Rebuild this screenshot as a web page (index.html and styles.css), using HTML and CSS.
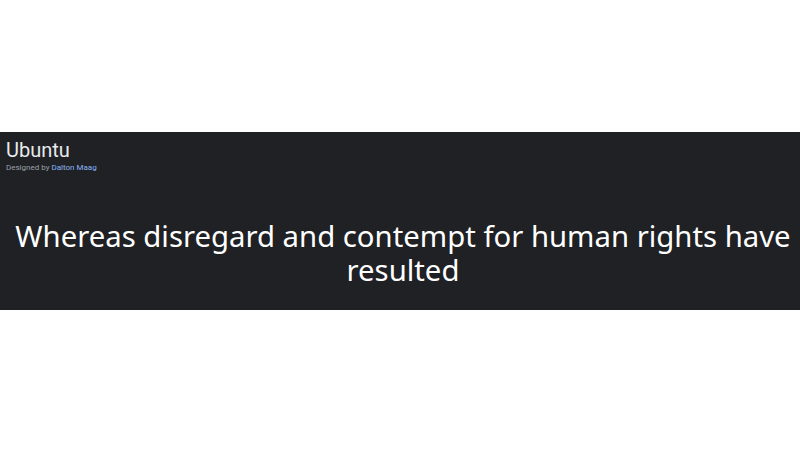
FILE: index.html
```html
<!DOCTYPE html>
<html>
<head>
<meta charset="utf-8">
<link rel="stylesheet" href="styles.css">
</head>
<body>
<div class="page">
  <section class="card">
    <header class="head">
      <div class="name">Ubuntu</div>
      <div class="designer">Designed by <span class="link">Dalton Maag</span></div>
    </header>
    <p class="sample">Whereas disregard and contempt for human rights have resulted</p>
  </section>
</div>
</body>
</html>
```
FILE: styles.css
```css
html, body {
  margin: 0;
  padding: 0;
  background: #ffffff;
}
.page {
  width: 800px;
  height: 450px;
  padding-top: 132px;
  box-sizing: border-box;
}
.card {
  background: #202124;
  height: 178px;
  box-sizing: border-box;
  padding: 7px 6px 0 6px;
  display: flex;
  flex-direction: column;
}
.head {
  font-family: "Roboto", "Liberation Sans", sans-serif;
}
.name {
  color: #e8eaed;
  font-size: 20px;
  line-height: 23px;
  font-weight: 400;
}
.designer {
  color: #9aa0a6;
  font-size: 8px;
  line-height: 12px;
}
.link {
  color: #8ab4f8;
}
.sample {
  margin: 45px 0 0 0;
  padding-left: 6px;
  color: #ffffff;
  font-family: "Noto Sans", "Open Sans", sans-serif;
  font-size: 29.3px;
  line-height: 34px;
  text-align: center;
}
```
